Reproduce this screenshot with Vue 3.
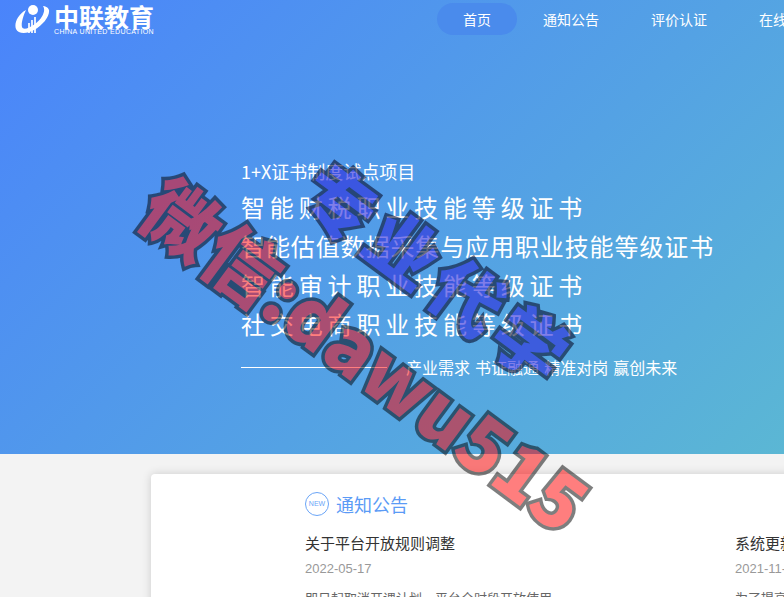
<script setup>
const navItems = ['首页', '通知公告', '评价认证', '在线学习']

const programs = [
  { name: '智能财税职业技能等级证书', wide: true },
  { name: '智能估值数据采集与应用职业技能等级证书', wide: false },
  { name: '智能审计职业技能等级证书', wide: true },
  { name: '社交电商职业技能等级证书', wide: true },
]

const notices = [
  { title: '关于平台开放规则调整', date: '2022-05-17', text: '即日起取消开课计划，平台全时段开放使用' },
  { title: '系统更新通知', date: '2021-11-26', text: '为了提高平台的服务质量，系统将进行升级' },
]
</script>

<template>
  <div class="page">
    <section class="hero">
      <header class="topbar">
        <div class="logo">
          <svg class="logo__mark" width="36" height="30" viewBox="14 5 36 30" aria-hidden="true">
            <path fill="#fff" d="M25 10C16 15 13 24 15 29C17 34 26 34 33 30C42 25 49 16 48 10C47 7 44 6 42 6C45 10 42 18 34 24C27 29 22 30 21 27C20 24 22 16 25 10Z" />
            <circle cx="32" cy="10" r="5" fill="#fff" />
            <path fill="#fff" opacity="0.85" d="M27 23h2v10h-2zM30 20h2v13h-2zM33 17h2v16h-2z" />
          </svg>
          <div class="logo__text">
            <div class="logo__cn">中联教育</div>
            <div class="logo__en">CHINA UNITED EDUCATION</div>
          </div>
        </div>
        <nav class="nav">
          <a v-for="(item, i) in navItems" :key="item" class="nav__item" :class="{ active: i === 0 }">{{ item }}</a>
        </nav>
      </header>

      <div class="hero__body">
        <p class="hero__kicker">1+X证书制度试点项目</p>
        <p v-for="p in programs" :key="p.name" class="hero__line" :class="{ wide: p.wide }">{{ p.name }}</p>
        <div class="hero__slogan">
          <span class="hero__rule"></span>
          <span>产业需求 书证融通 精准对岗 赢创未来</span>
        </div>
      </div>
    </section>

    <section class="content">
      <div class="card">
        <div class="notice">
          <div class="notice__head">
            <span class="badge">NEW</span>
            <h2>通知公告</h2>
          </div>
          <div class="notice__list">
            <article v-for="n in notices" :key="n.title" class="notice__item">
              <h3>{{ n.title }}</h3>
              <time>{{ n.date }}</time>
              <p>{{ n.text }}</p>
            </article>
          </div>
        </div>
      </div>
    </section>

    <!-- 水印 -->
    <div class="mark mark--red">微信:dawu515</div>
    <div class="mark mark--blue">专业代学</div>
  </div>
</template>

<style>
html, body {
  margin: 0;
  overflow: hidden;
}
</style>

<style scoped>
.page {
  position: relative;
  width: 100vw;
  height: 100vh;
  overflow: hidden;
  background: #f3f3f3;
  font-family: "Noto Sans CJK SC", "Liberation Sans", sans-serif;
}

.hero {
  height: 454px;
  box-sizing: border-box;
  background: linear-gradient(135deg, #4a84fb, #5bb7d4);
  color: #fff;
}

.topbar {
  display: flex;
  align-items: flex-start;
  padding: 3px 0 0 15px;
}

.logo {
  display: flex;
  align-items: flex-start;
  gap: 3px;
  width: 422px;
  flex-shrink: 0;
  padding-top: 2px;
}

.logo__cn {
  font-size: 25px;
  line-height: 22px;
  font-weight: 700;
  white-space: nowrap;
}

.logo__en {
  margin-top: 1px;
  font-family: "Liberation Sans", sans-serif;
  font-size: 7px;
  line-height: 8px;
  letter-spacing: 0.36px;
  white-space: nowrap;
}

.nav {
  display: flex;
  flex-shrink: 0;
}

.nav__item {
  padding: 0 26px;
  height: 32px;
  line-height: 32px;
  font-size: 14px;
  border-radius: 16px;
  white-space: nowrap;
}

.nav__item.active {
  background: #4a8bec;
}

.hero__body {
  padding: 122px 0 0 241px;
}

.hero__kicker {
  margin: 0 0 3px;
  font-size: 18px;
  line-height: 26px;
}

.hero__line {
  margin: 0;
  font-size: 24px;
  line-height: 39px;
  letter-spacing: 0.9px;
  white-space: nowrap;
}

.hero__line.wide {
  letter-spacing: 4.85px;
}

.hero__slogan {
  display: flex;
  align-items: center;
  gap: 19px;
  margin-top: 12px;
  font-size: 16px;
  line-height: 24px;
  word-spacing: 1.5px;
  white-space: nowrap;
}

.hero__rule {
  width: 146px;
  height: 1px;
  background: #fff;
}

.content {
  padding: 20px 0 0 151px;
}

.card {
  width: 1100px;
  min-height: 300px;
  box-sizing: border-box;
  padding: 17px 0 0 154px;
  background: #fff;
  border-radius: 4px;
  box-shadow: 0 0 10px rgba(0, 0, 0, 0.16);
}

.notice__head {
  display: flex;
  align-items: center;
  gap: 7px;
  height: 26px;
}

.notice__head h2 {
  margin: 0;
  font-size: 18px;
  font-weight: 400;
  color: #5b9bf6;
}

.badge {
  width: 22px;
  height: 22px;
  border: 1px solid #6aa5f7;
  border-radius: 50%;
  text-align: center;
  font-family: "Liberation Sans", sans-serif;
  font-size: 7px;
  line-height: 22px;
  color: #6aa5f7;
}

.notice__list {
  display: flex;
  margin-top: 14px;
}

.notice__item {
  width: 430px;
  flex-shrink: 0;
}

.notice__item h3 {
  margin: 0;
  font-size: 15px;
  line-height: 24px;
  font-weight: 400;
  color: #333;
}

.notice__item time {
  display: block;
  margin-top: 4px;
  font-family: "Liberation Sans", sans-serif;
  font-size: 13px;
  line-height: 20px;
  color: #999;
}

.notice__item p {
  margin: 9px 0 0;
  font-size: 13px;
  line-height: 20px;
  color: #666;
}

.mark {
  position: absolute;
  font-family: "Noto Sans CJK SC", "DejaVu Sans", sans-serif;
  font-weight: 900;
  white-space: nowrap;
  -webkit-text-stroke: 7px #000;
  paint-order: stroke fill;
  transform: translate(-50%, -50%) rotate(36.5deg);
  pointer-events: none;
}

.mark--red {
  left: 367px;
  top: 352px;
  font-size: 76px;
  color: #ff0000;
  opacity: 0.5;
}

.mark--blue {
  left: 440px;
  top: 272px;
  font-size: 72px;
  letter-spacing: 7px;
  color: #2d2adc;
  -webkit-text-stroke-color: #0a0f2d;
  opacity: 0.6;
}
</style>
